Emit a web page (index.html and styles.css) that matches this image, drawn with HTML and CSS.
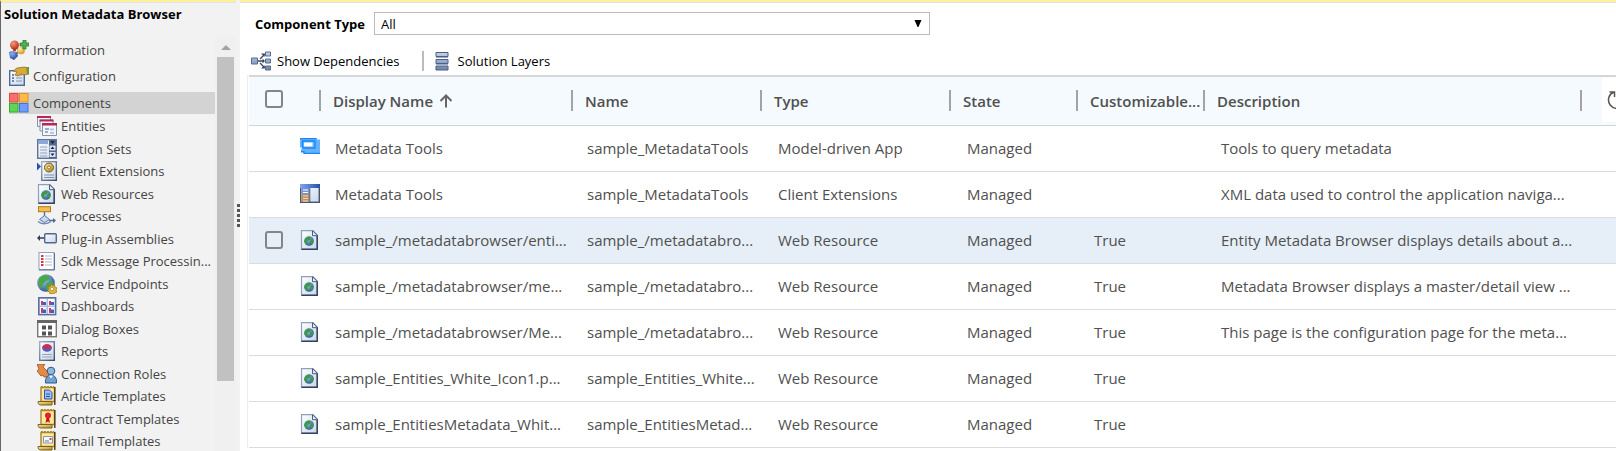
FILE: index.html
```html
<!DOCTYPE html>
<html lang="en">
<head>
<meta charset="utf-8">
<title>Solution Metadata Browser</title>
<link rel="stylesheet" href="styles.css">
</head>
<body>
<svg class="sprite" aria-hidden="true">
  <defs>
    <linearGradient id="g-page" x1="0" y1="0" x2="1" y2="1"><stop offset="0" stop-color="#fff"/><stop offset="1" stop-color="#c9d6e8"/></linearGradient>
    <linearGradient id="g-edge" x1="0" y1="0" x2="1" y2="1"><stop offset="0" stop-color="#a3b1c8"/><stop offset="1" stop-color="#3b4c68"/></linearGradient>
    <linearGradient id="g-gold" x1="0" y1="0" x2="1" y2="1"><stop offset="0" stop-color="#f6e7a0"/><stop offset="1" stop-color="#b08a1c"/></linearGradient>
    <linearGradient id="g-bar" x1="0" y1="0" x2="0" y2="1"><stop offset="0" stop-color="#c3d2ea"/><stop offset="1" stop-color="#6a84ad"/></linearGradient>
    <linearGradient id="g-head" x1="0" y1="0" x2="1" y2="0"><stop offset="0" stop-color="#7fa6f0"/><stop offset="1" stop-color="#2450ad"/></linearGradient>
    <radialGradient id="g-red" cx=".35" cy=".3" r=".8"><stop offset="0" stop-color="#f49a7c"/><stop offset="1" stop-color="#b8220c"/></radialGradient>
    <radialGradient id="g-blue" cx=".35" cy=".3" r=".8"><stop offset="0" stop-color="#8db1f2"/><stop offset="1" stop-color="#16398f"/></radialGradient>
    <radialGradient id="g-amber" cx=".35" cy=".3" r=".8"><stop offset="0" stop-color="#fff0a8"/><stop offset="1" stop-color="#d38c0a"/></radialGradient>
    <radialGradient id="g-globe" cx=".35" cy=".3" r=".8"><stop offset="0" stop-color="#a9c8f5"/><stop offset="1" stop-color="#1f4b93"/></radialGradient>
  </defs>
  <symbol id="i-info" viewBox="0 0 20 20">
    <path d="M7 7l5 5M5 14l8-3" stroke="#777" stroke-width="2"/>
    <circle cx="5.500" cy="5" r="4.500" fill="url(#g-red)"/><path d="M3.500 8.500h4l-1 3h-2z" fill="#a3402c"/>
    <circle cx="12" cy="10.500" r="3.800" fill="url(#g-amber)"/>
    <path d="M0 12l3-1 5 2 1 3-4 4-4-2z" fill="url(#g-blue)"/>
    <path d="M14 0h3v3h3v3h-3v3h-3V6h-3V3h3z" fill="#4fb04d" stroke="#2a7f32" stroke-width=".8"/>
  </symbol>
  <symbol id="i-config" viewBox="0 0 20 20">
    <rect x=".7" y="4.700" width="14.600" height="14.600" fill="url(#g-page)" stroke="#4d6a96" stroke-width="1.400"/>
    <path d="M3 9h2M3 12h2M3 15h2" stroke="#3b64a8" stroke-width="1.500"/><path d="M7 9h6M7 12h6M7 15h6" stroke="#8b96a8"/>
    <path d="M4 5l4-3 7-1 5 1v6l-5 1-3-1-3 2-3-1 2-3z" fill="#d9a93c" stroke="#8b6417" stroke-width=".7"/>
    <path d="M17 1h3v7h-2z" fill="#6e9a3e"/>
  </symbol>
  <symbol id="i-components" viewBox="0 0 20 20">
    <rect x=".5" y=".5" width="8.500" height="8.500" fill="#ff6e6b" stroke="#d94a48"/><rect x="10.500" y=".5" width="8.500" height="8.500" fill="#ffb84a" stroke="#dc9424"/>
    <rect x=".5" y="10.500" width="8.500" height="8.500" fill="#5ed654" stroke="#35aa30"/><rect x="10.500" y="10.500" width="8.500" height="8.500" fill="#6f9cff" stroke="#4372d8"/>
  </symbol>
  <symbol id="i-entities" viewBox="0 0 20 20">
    <g fill="#f3f5fa" stroke="#8693ad"><path d="M.5.5h13v10H.5z"/><path d="M3 4h13v11H3z"/><path d="M5.500 7.500h14v12h-14z"/></g>
    <path d="M0 0h14v2H0zM2.500 3.500h14v2h-14zM5 7h15v2.500H5z" fill="#b32b55"/>
    <path d="M8 13h4M8 16h3" stroke="#7d94bd" stroke-width="1.500"/><path d="M13 12.500h4v2h-4zM13 16h4v2h-4z" fill="#b9c8e2"/>
  </symbol>
  <symbol id="i-options" viewBox="0 0 20 20">
    <rect x=".7" y=".7" width="18.600" height="18.600" fill="url(#g-page)" stroke="#5d7397" stroke-width="1.400"/>
    <path d="M1 1h10v4H1z" fill="#8ca8d8"/><path d="M12 1h7v18h-7z" fill="#51678d"/>
    <path d="M3 8h7M3 11h7M3 14h7M3 17h7" stroke="#93a3bf"/><path d="M12.500 6.500h6v5h-6zM12.500 13h6v5h-6z" fill="#dce4f1"/>
    <path d="M13.500 10l2-2.500 2 2.500zM13.500 14.500h4l-2 2.500zM13.500 2h4l-2 3z" fill="#18243a"/>
  </symbol>
  <symbol id="i-client" viewBox="0 0 20 20">
    <rect x="4.700" y=".7" width="14.600" height="18.600" fill="url(#g-page)" stroke="url(#g-edge)" stroke-width="1.400"/>
    <circle cx="12" cy="6.500" r="4.500" fill="url(#g-gold)" stroke="#72581a"/><circle cx="12" cy="6.500" r="1.500" fill="#fff4c8" stroke="#72581a" stroke-width=".7"/>
    <path d="M7 14h10M7 16.500h10" stroke="#8291ab"/><path d="M0 1.500l4 4-4 4z" fill="#2453ae"/>
  </symbol>
  <symbol id="i-web" viewBox="0 0 20 20">
    <path d="M1.500.7h11.500L17.300 5v14.300H1.500z" fill="url(#g-page)" stroke="#8fa0bc" stroke-width="1.200"/><path d="M17.200 5v14.200H1.500" fill="none" stroke="#33435f" stroke-width="1.500"/>
    <path d="M12.500.7v5h5z" fill="#e9eff8" stroke="#4c5d7b"/>
    <circle cx="9" cy="11" r="4.800" fill="url(#g-globe)"/><path d="M5 8.500l3-2 3 .5-1 3-3 1 1 3-2 .5-2-3zM11 9l2.500 1-.5 3-2 2-1-3z" fill="#3b9a45"/>
  </symbol>
  <symbol id="i-process" viewBox="0 0 20 20">
    <path d="M7.500 6v5M12 14.500h6" stroke="#556f9f" stroke-width="1.400"/><path d="M16 12l3 2.500-3 2.500z" fill="#4267a5"/>
    <rect x="1.500" y=".7" width="12" height="5" fill="#f4bd4f" stroke="#b07b1a"/>
    <path d="M7.500 9.500l5 4-5 3-5-3z" fill="#c9d8f2" stroke="#6079a8"/><path d="M1 15.500c3 3 9 3 13 0" fill="none" stroke="#7388ae" stroke-width="1.500"/>
  </symbol>
  <symbol id="i-plugin" viewBox="0 0 20 20">
    <path d="M1 9h7" stroke="#333d50" stroke-width="1.500"/><path d="M0 9l3-3v6z" fill="#333d50"/>
    <rect x="7.700" y="4.700" width="11.600" height="9" rx="1" fill="url(#g-page)" stroke="#4f6891" stroke-width="1.400"/>
  </symbol>
  <symbol id="i-sdk" viewBox="0 0 20 20">
    <rect x="2" y="1.500" width="15" height="17" fill="#fff" stroke="#8ba0c2"/><path d="M17.500 2v17H2" fill="none" stroke="#5c7298"/>
    <path d="M4 5h2.500M4 8h2.500M4 11h2.500M4 14h2.500" stroke="#e23036" stroke-width="2"/><path d="M8 5h7M8 8h7M8 11h7M8 14h7" stroke="#a9b6d0"/>
  </symbol>
  <symbol id="i-service" viewBox="0 0 20 20">
    <circle cx="9" cy="9" r="8.800" fill="url(#g-globe)"/><path d="M2 4l5-3 5 1 1 3-4 2-3 3-2 4-3-3zM10 9l5-2 2 3-4 2-2 5-3-3z" fill="#48a848"/>
    <path d="M14.500 9.500l1 2 2-.5.5 2 2 1-1 2 1 2-2 .5-1 1.500-2-.5-2 .5-.5-2-2-1 1-2-.5-2 2-.5z" fill="#e0b63c" stroke="#927017" stroke-width=".7"/><circle cx="15" cy="15" r="1.800" fill="#fff7d8" stroke="#927017" stroke-width=".6"/>
  </symbol>
  <symbol id="i-dash" viewBox="0 0 20 20">
    <rect x="1.700" y="1.700" width="17" height="17" fill="#a9bbdf" stroke="#58709d" stroke-width="1.400"/><path d="M3 3h6.500v6.500H3zM11 3h6.500v6.500H11zM3 11h6.500v6.500H3zM11 11h6.500v6.500H11z" fill="#f7f9ff"/>
    <path d="M4 5h2v4H4zM12 5h2v4h-2zM4 12h2v5H4zM12 12h2v5h-2z" fill="#d23665"/><path d="M6 6h3v3H6zM14 6h3v3h-3zM6 13.500h3V17H6zM14 13.500h3V17h-3z" fill="#3662c4"/>
  </symbol>
  <symbol id="i-dialog" viewBox="0 0 20 20">
    <rect x=".7" y="1.700" width="18.600" height="16" fill="#fff" stroke="#777" stroke-width="1.400"/><path d="M0 1h20v3H0z" fill="#666"/>
    <path d="M5 6.500h4v4H5zM11 6.500h4v4h-4zM5 12.500h4v4H5zM11 12.500h4v4h-4z" fill="#555"/>
  </symbol>
  <symbol id="i-report" viewBox="0 0 20 20">
    <rect x="2.700" y=".7" width="14.600" height="18.600" fill="url(#g-page)" stroke="url(#g-edge)" stroke-width="1.400"/>
    <ellipse cx="10" cy="7" rx="4.800" ry="3.800" fill="#4a5fc0"/><path d="M5.200 7a4.800 3.800 0 0 1 9.600 0l-4.800 1z" fill="#d32b50"/><path d="M5 13.500h10M5 16h10" stroke="#95a5c0"/>
  </symbol>
  <symbol id="i-connect" viewBox="0 0 20 20">
    <path d="M0 0l8 0-2 3 4 4 2-2 0 8-5 0-1-2-2 1-4-5 2-2z" fill="#e58a45" stroke="#9b4e1b" stroke-width=".8"/>
    <circle cx="14" cy="7" r="3.800" fill="#8fb8df" stroke="#31567f"/><path d="M8.500 19c-.5-5 2-8 5.500-8s6 3 5.500 8z" fill="#6da2d6" stroke="#31567f"/><path d="M12 11.500l2 3 2-3z" fill="#fff"/>
  </symbol>
  <symbol id="i-tpl" viewBox="0 0 20 20">
    <path d="M4 1.500h13.500v14H4z" fill="#ffe9a0" stroke="#a88430" stroke-width="1.400"/><path d="M17.800 1v18" stroke="#4c3a14" stroke-width="1.400"/>
    <path d="M4 .7h13" stroke="#b48b2a" stroke-width="1.400" stroke-dasharray="2 1"/><path d="M1 15.500h14v3.500H3.500c-2 0-2.500-2-2.500-3.500z" fill="url(#g-gold)" stroke="#80601a"/>
  </symbol>
  <symbol id="i-article" viewBox="0 0 20 20"><use href="#i-tpl"/><path d="M7.500 4h5l2.500 2.500V13H7.500z" fill="#9dbdf5" stroke="#2c55a8"/><path d="M9 8h4M9 10.500h4" stroke="#2c55a8"/></symbol>
  <symbol id="i-contract" viewBox="0 0 20 20"><use href="#i-tpl"/><circle cx="11" cy="6.500" r="3" fill="#e32222"/><path d="M9.500 9l-1 5 2.500-1.500 2 1.500-1-5z" fill="#c81414"/></symbol>
  <symbol id="i-email" viewBox="0 0 20 20"><use href="#i-tpl"/><path d="M6.500 5.500h9v6.500h-9z" fill="#f4f8ff" stroke="#8296b8"/><path d="M12.500 7h2v2h-2z" fill="#d9403c"/><path d="M8 10h4" stroke="#5a75a8"/></symbol>
  <symbol id="i-app" viewBox="0 0 20 20">
    <path d="M0 0h17v1.500h3V16H4v-1.500H1V11h2V9.500H0z" fill="#66b2ff"/>
    <path d="M0 .7h16.500M2.500 3h12.500v7H2.500zM1 13.700h3v1.700h16" fill="none" stroke="#1a86f7" stroke-width="1.300"/>
    <path d="M4 4.500h8.500v4H4z" fill="#fff"/>
  </symbol>
  <symbol id="i-sitemap" viewBox="0 0 20 20">
    <rect x=".7" y=".7" width="18.600" height="17.600" fill="url(#g-page)" stroke="#45556f" stroke-width="1.400"/><path d="M0 0h20v4H0z" fill="url(#g-head)"/>
    <path d="M1.500 4h8v6h-8z" fill="#7593d6"/><path d="M1.500 10h8v8h-8z" fill="#b98d66"/><path d="M3 6h5M3 8.500h5" stroke="#fff"/><path d="M3 12h5M3 14.500h5M3 17h5" stroke="#f4dcc0"/><path d="M9.800 4v14" stroke="#4c5d7b"/>
  </symbol>
  <symbol id="i-deps" viewBox="0 0 20 20">
    <path d="M7 10h6M9 8l5-5M9 12l5 5" stroke="#39485f" stroke-width="1.300" fill="none"/><path d="M10 2.500h3.500V6zM11.500 7.500L14 10l-2.500 2.500zM10 17.500h3.500V14z" fill="#39485f"/>
    <g fill="url(#g-bar)" stroke="#596c8d"><path d="M.5 7h6v6h-6zM14.500 1h5v4h-5zM14.500 8h5v4h-5zM14.500 15h5v4h-5z"/></g>
  </symbol>
  <symbol id="i-layers" viewBox="0 0 20 20">
    <g fill="url(#g-bar)" stroke="#4d5f80"><path d="M4 1.500h12v4H4zM4 8.500h12v4H4zM4 15h12v4H4z"/></g><path d="M4 6.500h12M4 13.500h12" stroke="#9ba9c0"/>
  </symbol>
</svg>

<div class="app">
  <aside class="sidebar">
    <h1 class="title">Solution Metadata Browser</h1>
    <div class="nav-area">
      <nav class="nav">
        <a class="top" href="#"><svg><use href="#i-info"/></svg>Information</a>
        <a class="top" href="#"><svg><use href="#i-config"/></svg>Configuration</a>
        <a class="top selected" href="#"><svg><use href="#i-components"/></svg>Components</a>
        <div class="subnav">
          <a href="#"><svg><use href="#i-entities"/></svg>Entities</a>
          <a href="#"><svg><use href="#i-options"/></svg>Option Sets</a>
          <a href="#"><svg><use href="#i-client"/></svg>Client Extensions</a>
          <a href="#"><svg><use href="#i-web"/></svg>Web Resources</a>
          <a href="#"><svg><use href="#i-process"/></svg>Processes</a>
          <a href="#"><svg><use href="#i-plugin"/></svg>Plug-in Assemblies</a>
          <a href="#"><svg><use href="#i-sdk"/></svg>Sdk Message Processin...</a>
          <a href="#"><svg><use href="#i-service"/></svg>Service Endpoints</a>
          <a href="#"><svg><use href="#i-dash"/></svg>Dashboards</a>
          <a href="#"><svg><use href="#i-dialog"/></svg>Dialog Boxes</a>
          <a href="#"><svg><use href="#i-report"/></svg>Reports</a>
          <a href="#"><svg><use href="#i-connect"/></svg>Connection Roles</a>
          <a href="#"><svg><use href="#i-article"/></svg>Article Templates</a>
          <a href="#"><svg><use href="#i-contract"/></svg>Contract Templates</a>
          <a href="#"><svg><use href="#i-email"/></svg>Email Templates</a>
        </div>
      </nav>
      <div class="scrollbar"><span class="arrow"></span><span class="thumb"></span></div>
    </div>
  </aside>
  <div class="splitter"><i></i><i></i><i></i><i></i><i></i></div>
  <main class="main">
    <div class="filter">
      <label for="ctype">Component Type</label>
      <div class="select-wrap">
        <select id="ctype"><option>All</option></select>
        <svg class="caret" viewBox="0 0 8 8"><path d="M0 0h8L4.500 8h-1z"/></svg>
      </div>
    </div>
    <div class="toolbar">
      <button type="button"><svg><use href="#i-deps"/></svg>Show Dependencies</button>
      <span class="divider"></span>
      <button type="button"><svg><use href="#i-layers"/></svg>Solution Layers</button>
    </div>
    <div class="grid">
      <table>
        <colgroup><col class="c-check"><col class="c-display"><col class="c-name"><col class="c-name"><col class="c-state"><col class="c-custom"><col><col class="c-end"></colgroup>
        <thead>
          <tr>
            <th><input type="checkbox" aria-label="Select all"></th>
            <th><span>Display Name <svg class="sort" viewBox="0 0 14 14"><path d="M7 13.500V1.500M1.500 7L7 1.500 12.500 7"/></svg></span></th>
            <th><span>Name</span></th><th><span>Type</span></th><th><span>State</span></th><th><span>Customizable...</span></th><th><span>Description</span></th>
            <th class="end"><span><button type="button" class="refresh" aria-label="Refresh"><svg viewBox="0 0 20 20"><path d="M7 2a8.500 8.500 0 1 0 6 0M2.500 2H7.500V7"/></svg></button></span></th>
          </tr>
        </thead>
        <tbody>
          <tr><td><div class="pick"><svg><use href="#i-app"/></svg></div></td><td>Metadata Tools</td><td>sample_MetadataTools</td><td>Model-driven App</td><td>Managed</td><td></td><td>Tools to query metadata</td><td></td></tr>
          <tr><td><div class="pick"><svg><use href="#i-sitemap"/></svg></div></td><td>Metadata Tools</td><td>sample_MetadataTools</td><td>Client Extensions</td><td>Managed</td><td></td><td>XML data used to control the application naviga...</td><td></td></tr>
          <tr class="hover"><td><div class="pick"><input type="checkbox" aria-label="Select row"><svg><use href="#i-web"/></svg></div></td><td>sample_/metadatabrowser/enti...</td><td>sample_/metadatabro...</td><td>Web Resource</td><td>Managed</td><td>True</td><td>Entity Metadata Browser displays details about a...</td><td></td></tr>
          <tr><td><div class="pick"><svg><use href="#i-web"/></svg></div></td><td>sample_/metadatabrowser/me...</td><td>sample_/metadatabro...</td><td>Web Resource</td><td>Managed</td><td>True</td><td>Metadata Browser displays a master/detail view ...</td><td></td></tr>
          <tr><td><div class="pick"><svg><use href="#i-web"/></svg></div></td><td>sample_/metadatabrowser/Me...</td><td>sample_/metadatabro...</td><td>Web Resource</td><td>Managed</td><td>True</td><td>This page is the configuration page for the meta...</td><td></td></tr>
          <tr><td><div class="pick"><svg><use href="#i-web"/></svg></div></td><td>sample_Entities_White_Icon1.p...</td><td>sample_Entities_White...</td><td>Web Resource</td><td>Managed</td><td>True</td><td></td><td></td></tr>
          <tr><td><div class="pick"><svg><use href="#i-web"/></svg></div></td><td>sample_EntitiesMetadata_Whit...</td><td>sample_EntitiesMetad...</td><td>Web Resource</td><td>Managed</td><td>True</td><td></td><td></td></tr>
        </tbody>
      </table>
    </div>
  </main>
</div>
</body>
</html>
```

FILE: styles.css
```css
* { box-sizing: border-box; }
body {
  margin: 0;
  font-family: "Open Sans", "Noto Sans", sans-serif;
  font-size: 13px;
  color: #000;
  background: #fff;
}
.sprite { position: absolute; width: 0; height: 0; }
svg { display: block; flex: none; width: 20px; height: 20px; }
.app { display: flex; height: 100vh; overflow: hidden; }

.sidebar {
  width: 236px;
  flex: none;
  display: flex;
  flex-direction: column;
  background: #f2f2f2;
  border-left: 1px solid #666;
  border-top: 2px solid #fff09c;
}
.title { margin: 0; padding: 1px 0 0 3px; font-size: 13px; line-height: 20px; font-weight: 700; border-top: 1px solid #e4e4e4; white-space: nowrap; }
.nav-area { flex: 1; min-height: 0; display: flex; padding-top: 12px; }
.nav { flex: 1; min-width: 0; padding-left: 8px; }
.nav a { display: flex; align-items: center; height: 22px; color: #444; text-decoration: none; white-space: nowrap; }
.nav a svg { margin-right: 4px; }
.nav .top { margin: 4px 0; }
.nav .top:first-child { margin-top: 3px; }
.nav .selected { background: #d3d3d3; margin: 5px 0 1px; }
.subnav { padding-left: 28px; }
.subnav a:nth-child(even) { height: 23px; }
.scrollbar { width: 21px; flex: none; padding: 0 2px; display: flex; flex-direction: column; align-items: center; background: #f0f0f0; }
.arrow { margin: 9px 0 7px; border: 5px solid transparent; border-top: 0; border-bottom-color: #a3a3a3; }
.thumb { width: 17px; flex: 0 0 78%; background: #c1c1c1; }

.splitter { width: 4px; flex: none; display: flex; flex-direction: column; justify-content: center; gap: 2px; align-items: flex-end; background: #f2f2f2; padding-bottom: 20px; }
.splitter i { width: 3px; height: 3px; background: #555; }

.main { flex: 1; min-width: 0; border-top: 2px solid #fff09c; }
.filter { display: flex; align-items: center; gap: 8px; padding: 9px 0 0 15px; border-top: 1px solid #e0e0e0; }
.filter label { font-weight: 700; width: 111px; white-space: nowrap; }
.select-wrap { position: relative; width: 556px; }
select { appearance: none; display: block; width: 100%; height: 23px; padding: 1px 6px 0; border: 1px solid #bbb; border-radius: 0; background: #fff; font: inherit; color: #000; }
.caret { position: absolute; right: 8px; top: 8px; width: 8px; height: 7px; pointer-events: none; }

.toolbar { display: flex; align-items: center; height: 40px; padding: 12px 0 0 11px; }
button { font: inherit; border: 0; padding: 0; background: none; color: #000; display: flex; align-items: center; gap: 6px; white-space: nowrap; }
.divider { width: 2px; height: 20px; margin: 0 8px 0 22px; background: #bbb; }

.grid { margin-left: 7px; padding-left: 1px; border-left: 1px solid #eee; }
table { width: 100%; table-layout: fixed; border-collapse: separate; border-spacing: 0; }
.c-check { width: 70px; }
.c-display { width: 252px; }
.c-name { width: 189px; }
.c-state { width: 127px; }
.c-custom { width: 127px; }
.c-end { width: 36px; }
th { height: 51px; padding: 0; background: #f4fafd; border-top: 2px solid #d6d6d6; border-bottom: 1px solid #d0d5d7; font-size: 15px; font-weight: 600; color: #505050; text-align: left; }
th > span { display: flex; align-items: center; gap: 6px; height: 21px; padding: 2px 0 0 12px; margin-bottom: 2px; border-left: 2px solid #a3a3a3; white-space: nowrap; }
th > input { margin-bottom: 4px; }
.sort { width: 14px; height: 14px; fill: none; stroke: #666; stroke-width: 2; }
th.end > span { padding: 0 0 0 20px; }
.refresh { flex: none; width: 44px; height: 44px; padding-left: 5px; background: #fff; }
.refresh svg { width: 20px; height: 20px; fill: none; stroke: #555; stroke-width: 1.500; }
td { height: 46px; padding: 0 0 2px 18px; border-bottom: 1px solid #dcdcdc; font-size: 15px; color: #505050; white-space: nowrap; overflow: hidden; }
td:nth-child(2), td:nth-child(3) { padding-left: 16px; }
th:last-child { overflow: hidden; }
td:first-child { padding: 0 0 2px; overflow: visible; }
.pick { display: flex; justify-content: flex-end; align-items: center; }
.pick svg { margin-right: -1px; }
.hover td { background: #e6eff7; }
input[type="checkbox"] { appearance: none; display: block; width: 18px; height: 18px; margin: 0 0 0 16px; border: 2px solid #858585; border-radius: 3px; background: transparent; }
th > input[type="checkbox"] { margin-bottom: 4px; }
.pick input[type="checkbox"] { margin-right: auto; }
```
